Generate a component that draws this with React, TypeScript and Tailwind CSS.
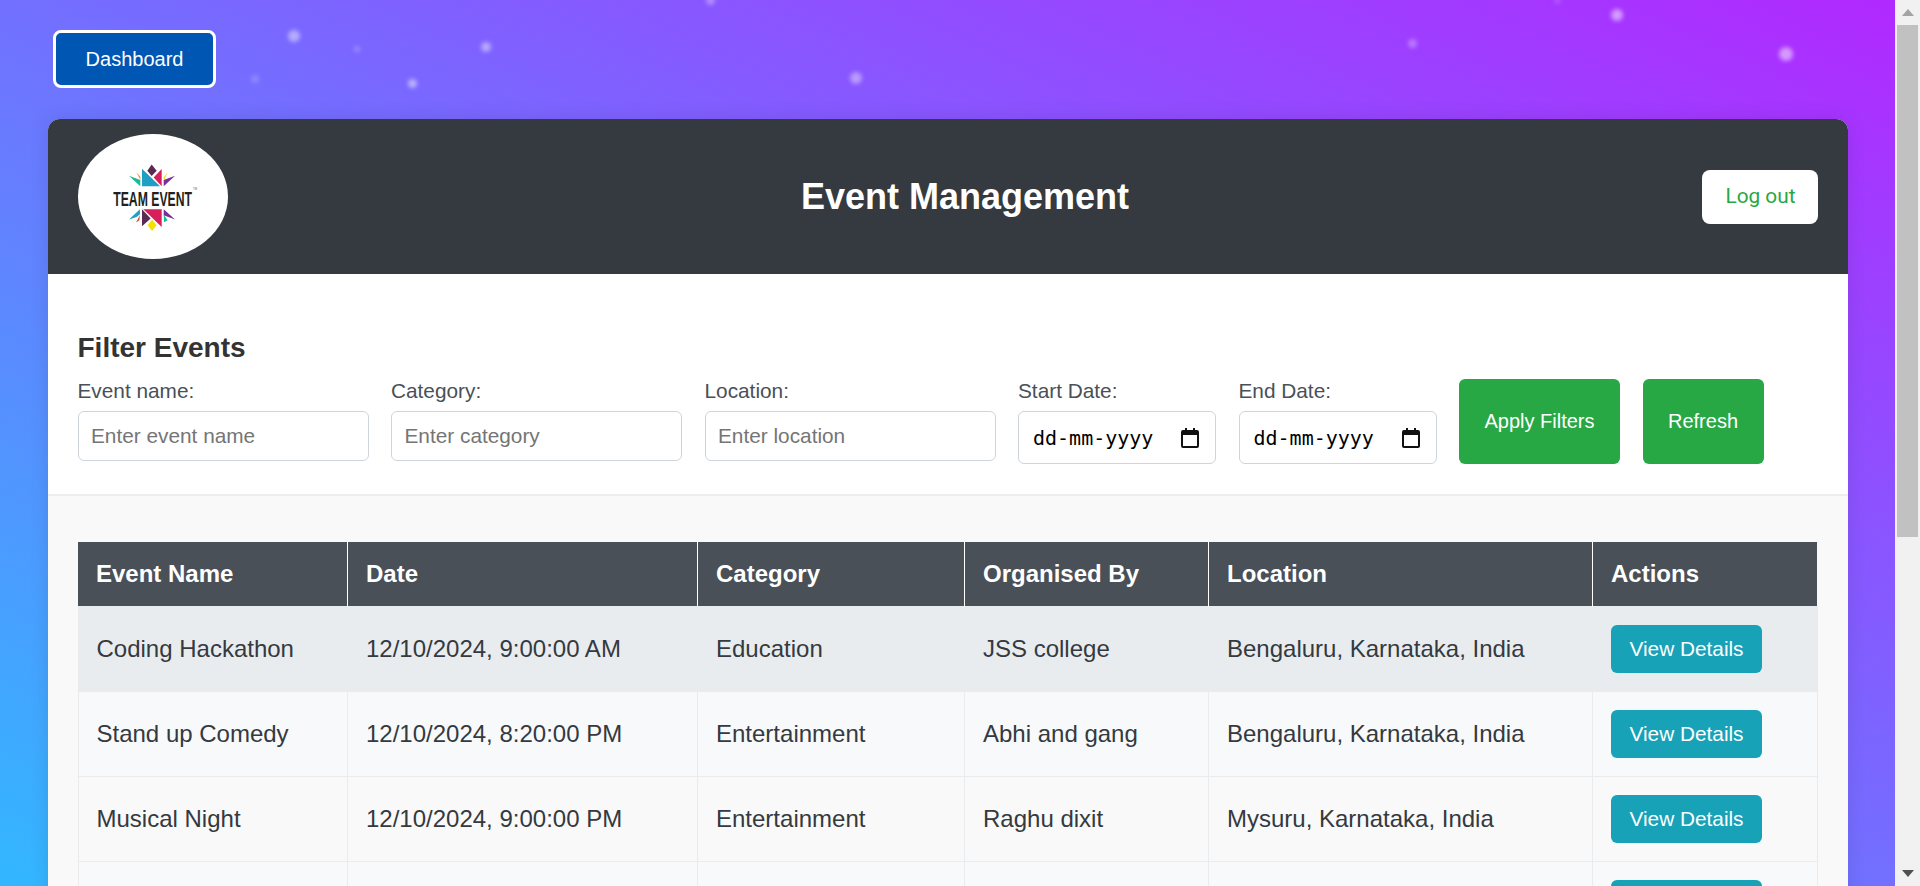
import React from "react";

const dots = [
  { x: 294, y: 36, s: 12, o: 0.45 },
  { x: 357, y: 49, s: 6, o: 0.25 },
  { x: 486, y: 47, s: 10, o: 0.45 },
  { x: 255, y: 79, s: 8, o: 0.18 },
  { x: 412, y: 83, s: 9, o: 0.5 },
  { x: 856, y: 78, s: 12, o: 0.4 },
  { x: 710, y: 0, s: 9, o: 0.35 },
  { x: 1412, y: 43, s: 9, o: 0.3 },
  { x: 1557, y: 0, s: 7, o: 0.15 },
  { x: 1617, y: 15, s: 12, o: 0.5 },
  { x: 1786, y: 54, s: 14, o: 0.5 },
];

const rows = [
  ["Coding Hackathon", "12/10/2024, 9:00:00 AM", "Education", "JSS college", "Bengaluru, Karnataka, India"],
  ["Stand up Comedy", "12/10/2024, 8:20:00 PM", "Entertainment", "Abhi and gang", "Bengaluru, Karnataka, India"],
  ["Musical Night", "12/10/2024, 9:00:00 PM", "Entertainment", "Raghu dixit", "Mysuru, Karnataka, India"],
  ["", "", "", "", ""],
];

const rowBg = ["bg-[#e9ecef]", "bg-[#f8f9fb]", "bg-[#f9f9f9]", "bg-[#f8f9fb]"];

function Logo() {
  return (
    <div className="w-[150px] h-[125px] rounded-[50%] bg-white overflow-hidden shrink-0">
      <svg width="150" height="125" viewBox="55 42 448 374">
        <polygon points="275,133 290,152 275,168 262,152" fill="#5a2a52" />
        <polygon points="246,146 246,198 300,198" fill="#1f9fc4" />
        <polygon points="305,147 305,198 281,172" fill="#d81e5b" />
        <polygon points="207,167 241,180 241,198" fill="#1bb99a" />
        <polygon points="229,156 241,170 241,180" fill="#f7941d" />
        <polygon points="323,157 311,172 312,181" fill="#f5e000" />
        <polygon points="345,167 311,198 311,180" fill="#7b2d9c" />
        <text transform="translate(160 256) scale(0.6 1)" fontFamily="Liberation Sans" fontWeight="700" fontSize="61" fill="#231f20">TEAM EVENT</text>
        <text x="399" y="209" fontFamily="Liberation Sans" fontSize="8" fill="#555">TM</text>
        <polygon points="240,267 207,298 230,290 240,282" fill="#1f9fc4" />
        <polygon points="240,285 228,307 238,300" fill="#e8392b" />
        <polygon points="246,267 246,318 272,295" fill="#5a2a52" />
        <polygon points="250,267 305,267 305,320" fill="#d81e5b" />
        <polygon points="276,298 290,315 276,332 263,315" fill="#f5e000" />
        <polygon points="311,283 323,300 312,306" fill="#1bb99a" />
        <polygon points="311,267 345,298 311,285" fill="#7b2d9c" />
      </svg>
    </div>
  );
}

function CalendarIcon() {
  return (
    <svg width="18" height="20" viewBox="0 0 18 20" className="shrink-0">
      <path
        fillRule="evenodd"
        d="M4 0h2v2h6V0h2v2h2a2 2 0 0 1 2 2v14a2 2 0 0 1-2 2H2a2 2 0 0 1-2-2V4a2 2 0 0 1 2-2h2V0ZM2 7v11h14V7H2Z"
        fill="#111"
      />
    </svg>
  );
}

function TextField({ label, placeholder }: { label: string; placeholder: string }) {
  return (
    <div className="w-[291px] shrink-0">
      <label className="block text-[20.8px] leading-[24px] mb-2 text-[#495057]">{label}</label>
      <input
        placeholder={placeholder}
        className="block w-full h-[50px] rounded-[6px] border border-[#ced4da] bg-white pl-[12.5px] text-[20.8px] placeholder:text-[#757575] outline-none"
      />
    </div>
  );
}

function DateField({ label }: { label: string }) {
  return (
    <div className="w-[198px] shrink-0">
      <div className="text-[20.8px] leading-[24px] mb-2 text-[#495057]">{label}</div>
      <div className="flex items-center justify-between h-[53px] rounded-[6px] border border-[#ced4da] bg-white pl-[14px] pr-[16px]">
        <span className="font-['DejaVu_Sans_Mono',monospace] text-[20px] leading-[24px] text-black">dd-mm-yyyy</span>
        <CalendarIcon />
      </div>
    </div>
  );
}

export default function App() {
  return (
    <div className="flex h-[886px] w-full overflow-hidden font-['Liberation_Sans',Arial,sans-serif] text-[#333]">
      <main className="relative flex-1 min-w-0 overflow-hidden bg-[linear-gradient(to_top_right,#33b7ff,#b129ff)]">
        {dots.map((d, i) => (
          <span
            key={i}
            className="absolute rounded-full bg-white blur-[2px]"
            style={{ left: d.x - d.s / 2, top: d.y - d.s / 2, width: d.s, height: d.s, opacity: d.o }}
          />
        ))}
        <div className="relative pt-[30px] pl-[53px]">
          <button className="block w-[163px] h-[58px] rounded-[8px] border-[3px] border-white bg-[#0056b3] text-white text-[20px]">
            Dashboard
          </button>
        </div>
        <div className="relative mt-[31px] mx-auto w-[1800px] rounded-t-[12px] overflow-hidden bg-[#f9f9f9] shadow-[0_0_20px_rgba(0,0,0,0.1)]">
          <header className="flex items-center justify-between h-[155px] pl-[30px] pr-[29px] bg-[#343a40]">
            <Logo />
            <h1 className="text-[36px] font-bold text-white leading-[44px]">Event Management</h1>
            <button className="w-[116px] h-[54px] rounded-[8px] bg-white text-[#28a745] text-[20.8px] font-['Roboto',sans-serif]">
              Log out
            </button>
          </header>
          <section className="bg-white pt-[59px] pb-[30px] px-[30px] border-b-2 border-[#eeeeee]">
            <h2 className="text-[28px] font-bold leading-[30px] mb-[16px] text-[#333]">Filter Events</h2>
            <div className="flex gap-[22.5px] h-[85px]">
              <TextField label="Event name:" placeholder="Enter event name" />
              <TextField label="Category:" placeholder="Enter category" />
              <TextField label="Location:" placeholder="Enter location" />
              <DateField label="Start Date:" />
              <DateField label="End Date:" />
              <button className="w-[161px] rounded-[6px] bg-[#28a745] text-white text-[20px] pb-[1px]">Apply Filters</button>
              <button className="w-[121px] rounded-[6px] bg-[#28a745] text-white text-[20px] pb-[1px]">Refresh</button>
            </div>
          </section>
          <section className="pt-[46px] px-[30px] pb-[40px]">
            <table className="w-[1739px] table-fixed border-collapse">
              <colgroup>
                <col className="w-[269.5px]" />
                <col className="w-[350px]" />
                <col className="w-[267px]" />
                <col className="w-[244px]" />
                <col className="w-[384px]" />
                <col className="w-[224.5px]" />
              </colgroup>
              <thead>
                <tr className="h-[64px] bg-[#495057] text-white text-[24px]">
                  {["Event Name", "Date", "Category", "Organised By", "Location", "Actions"].map((h, i) => (
                    <th key={h} className={`text-left font-bold pl-[18px] ${i < 5 ? "border-r border-white" : ""}`}>
                      {h}
                    </th>
                  ))}
                </tr>
              </thead>
              <tbody>
                {rows.map((r, i) => (
                  <tr key={i} className={`h-[85px] text-[24px] text-[#343a40] ${rowBg[i]}`}>
                    {r.map((c, j) => (
                      <td key={j} className="border border-[#e9ecef] pl-[18px]">
                        {c}
                      </td>
                    ))}
                    <td className="border border-[#e9ecef] pl-[18px]">
                      <button className="block w-[151px] h-[48px] rounded-[6px] bg-[#17a2b8] text-white text-[20.8px]">
                        View Details
                      </button>
                    </td>
                  </tr>
                ))}
              </tbody>
            </table>
          </section>
        </div>
      </main>
      <aside className="flex flex-col justify-between w-[25px] shrink-0 bg-[#f1f1f1]">
        <div>
          <div className="flex items-center justify-center h-[25px]">
            <svg width="12" height="7" viewBox="0 0 12 7"><polygon points="6,0 12,7 0,7" fill="#a3a3a3" /></svg>
          </div>
          <div className="ml-[2px] w-[21px] h-[512px] bg-[#c1c1c1]" />
        </div>
        <div className="flex items-center justify-center h-[25px]">
          <svg width="12" height="7" viewBox="0 0 12 7"><polygon points="0,0 12,0 6,7" fill="#505050" /></svg>
        </div>
      </aside>
    </div>
  );
}
